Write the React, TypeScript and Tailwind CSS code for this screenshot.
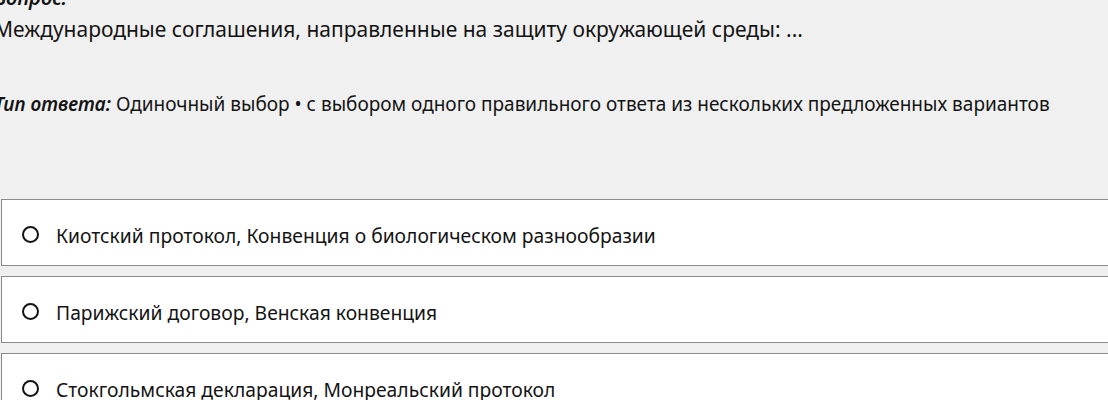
const options = [
  "Киотский протокол, Конвенция о биологическом разнообразии",
  "Парижский договор, Венская конвенция",
  "Стокгольмская декларация, Монреальский протокол",
];

export default function App() {
  return (
    <div
      className="h-[400px] w-[1108px] overflow-hidden bg-[#f0f0f0] text-[#141414]"
      style={{ fontFamily: '"Noto Sans", "Open Sans", sans-serif' }}
    >
      <div className="-mt-[14px] -ml-[6px]">
        <p className="text-[20px] leading-[24px] font-semibold italic">Вопрос:</p>
        <p className="mt-[5px] text-[21px] leading-[28px]">
          Международные соглашения, направленные на защиту окружающей среды: ...
        </p>
        <p className="mt-[48px] whitespace-nowrap text-[19px] leading-[26px]">
          <span className="font-semibold italic">Тип ответа:</span> Одиночный выбор • с выбором одного
          правильного ответа из нескольких предложенных вариантов
        </p>
      </div>
      <div className="mt-[82px] flex flex-col gap-[10px] pl-[1px]">
        {options.map((o) => (
          <label
            key={o}
            className="flex h-[67px] w-[1130px] shrink-0 items-center gap-[17px] border border-[#8c8c8c] bg-white pt-[3px] pl-[20px]"
          >
            <span className="h-[17px] w-[17px] shrink-0 rounded-full border-[2px] border-[#141414]" />
            <span className="whitespace-nowrap pt-[3px] text-[19.3px] leading-[26px]">{o}</span>
          </label>
        ))}
      </div>
    </div>
  );
}
